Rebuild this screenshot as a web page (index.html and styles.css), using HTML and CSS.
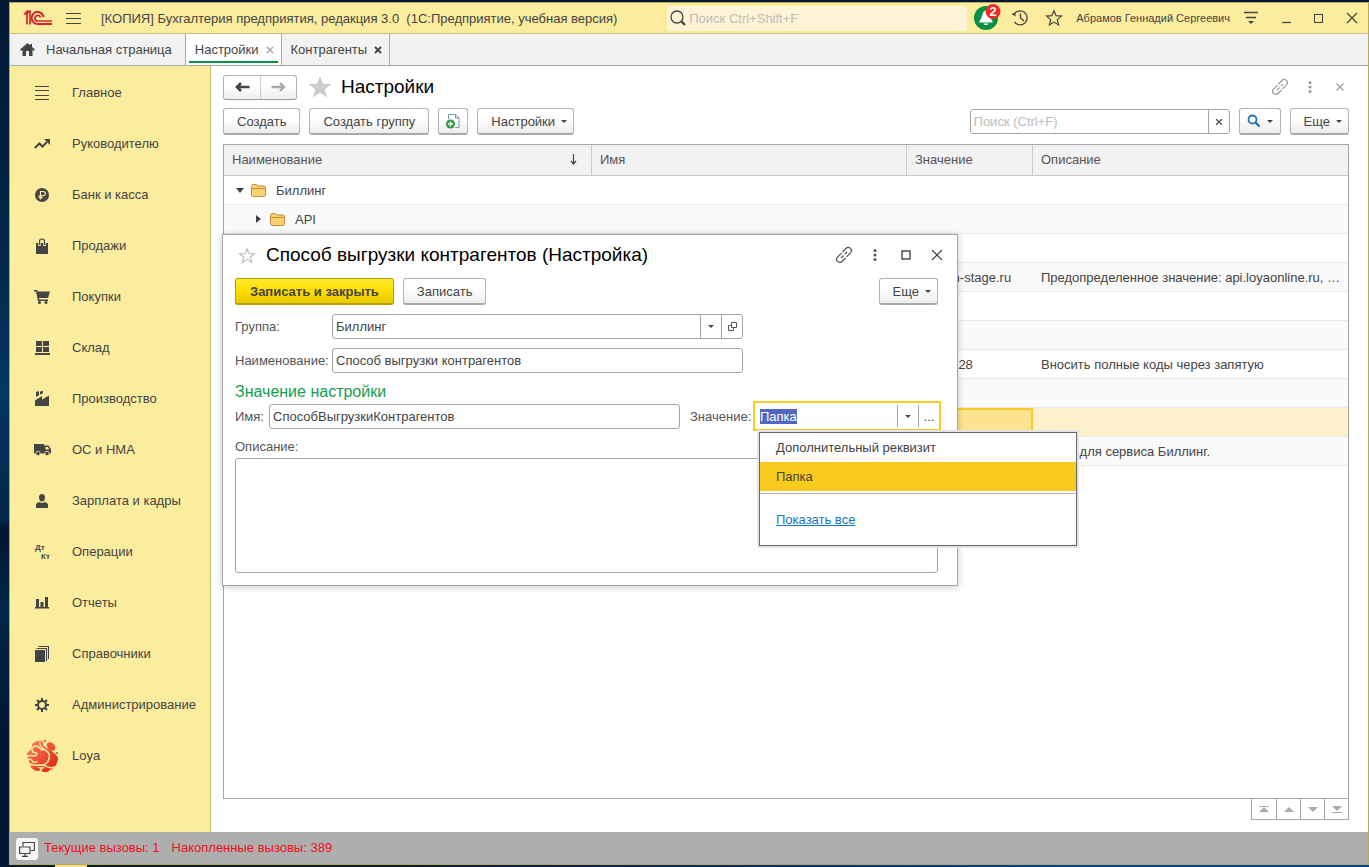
FILE: index.html
```html
<!DOCTYPE html>
<html lang="ru">
<head>
<meta charset="utf-8">
<title>Бухгалтерия предприятия, редакция 3.0</title>
<link rel="stylesheet" href="styles.css">
</head>
<body class="desktop">
<div class="app">
  <header class="titlebar">
    <svg class="logo" width="30" height="18" viewBox="0 0 30 18" fill="none" stroke="#d8232a" stroke-width="2"><path d="M1 5.500l3-3v13M3 6l3-4h1v13.500" stroke-width="1.700"/><path d="M20.500 8A6 6 0 1 0 15 15h14"/><path d="M17.500 8.500a2.800 2.800 0 1 0-2.500 3.500h14" stroke-width="1.700"/></svg>
    <button class="icon-btn burger" aria-label="Меню"><svg width="15" height="13" viewBox="0 0 15 13" stroke="#444" stroke-width="1.200"><path d="M0 1.500h15M0 6.500h15M0 11.500h15"/></svg></button>
    <span class="app-title">[КОПИЯ] Бухгалтерия предприятия, редакция 3.0&nbsp; (1С:Предприятие, учебная версия)</span>
    <label class="global-search">
      <svg width="18" height="18" viewBox="0 0 18 18" fill="none" stroke="#444"><circle cx="8" cy="8" r="6" stroke-width="1.300"/><path d="M12.500 12.500l3.500 3.500" stroke-width="2.400"/></svg>
      <input type="text" placeholder="Поиск Ctrl+Shift+F">
    </label>
    <div class="title-tools">
      <button class="icon-btn bell" aria-label="Оповещения"><svg width="28" height="28" viewBox="0 0 28 28"><circle cx="13" cy="15" r="12" fill="#059142"/><path d="M13 7.500c4 0 3.500 7.500 6.500 10.500v1.500h-13V18c3-3 2.500-10.500 6.500-10.500zM10.500 20.500h5c-.5 2-4.500 2-5 0z" fill="#fff"/><circle cx="20" cy="8.500" r="7.500" fill="#f12b24"/><text x="20" y="13" text-anchor="middle" class="badge-text">2</text></svg></button>
      <button class="icon-btn" aria-label="История"><svg width="18" height="18" viewBox="0 0 18 18" fill="none" stroke="#444" stroke-width="1.300"><path d="M3 5.500A7 7 0 1 1 3.500 13"/><path d="M9.500 4.500V9l3.500 3"/><path d="M.5 5l4 2.500V3.500z" fill="#444" stroke="none"/></svg></button>
      <button class="icon-btn favorites" aria-label="Избранное"><svg width="18" height="18" viewBox="0 0 18 18" fill="none" stroke="#444" stroke-width="1.200"><path d="M9 1.800l2.100 4.900 5.300.4-4.100 3.500 1.300 5.300L9 13.100l-4.600 2.800 1.300-5.300-4.100-3.500 5.300-.4z"/></svg></button>
      <span class="user">Абрамов Геннадий Сергеевич</span>
      <button class="icon-btn" aria-label="Сервис"><svg width="16" height="14" viewBox="0 0 16 14"><path d="M1 1.500h14M3 6.500h10" stroke="#444" stroke-width="1.400"/><path d="M5 10h6l-3 3z" fill="#444"/></svg></button>
      <button class="icon-btn" aria-label="Свернуть"><svg width="12" height="12" viewBox="0 0 12 12"><path d="M2 10.500h9" stroke="#444" stroke-width="1.200"/></svg></button>
      <button class="icon-btn" aria-label="Развернуть"><svg width="12" height="12" viewBox="0 0 12 12"><rect x="1.500" y="2.500" width="8" height="8" fill="none" stroke="#444"/></svg></button>
      <button class="icon-btn" aria-label="Закрыть"><svg width="12" height="12" viewBox="0 0 12 12"><path d="M1 1l10 10M11 1L1 11" stroke="#444" stroke-width="1.200"/></svg></button>
    </div>
  </header>

  <nav class="tabs">
    <button class="tab tab-home"><svg width="15" height="13" viewBox="0 0 15 13"><path d="M7.500 0L0 6.500 1.200 7.800 2.500 7v6H6V8h3v5h3.500V7l1.300.8L15 6.500 12 4V1h-2v1.200z" fill="#444"/></svg>Начальная страница</button>
    <button class="tab tab-active">Настройки<svg class="tab-x" width="8" height="8" viewBox="0 0 8 8"><path d="M1 1l6 6M7 1L1 7" stroke="#aaa" stroke-width="1.500"/></svg></button>
    <button class="tab">Контрагенты<svg class="tab-x" width="8" height="8" viewBox="0 0 8 8"><path d="M1 1l6 6M7 1L1 7" stroke="#444" stroke-width="1.800"/></svg></button>
  </nav>

  <div class="workspace">
    <nav class="sidebar">
      <a class="section" href="#"><span class="section-icon"><svg width="14" height="14" viewBox="0 0 14 14" stroke="#444"><path d="M0 .5h14M0 4.500h14M0 9.500h14M0 13.500h14"/></svg></span>Главное</a>
      <a class="section" href="#"><span class="section-icon"><svg width="16" height="10" viewBox="0 0 16 10"><path d="M.8 9l4.700-4.500 3 3L13 3" fill="none" stroke="#444" stroke-width="2"/><path d="M10 0h6v6z" fill="#444"/></svg></span>Руководителю</a>
      <a class="section" href="#"><span class="section-icon"><svg width="14" height="14" viewBox="0 0 14 14"><circle cx="7" cy="7" r="7" fill="#444"/><path d="M5.500 11.500V3.500h2.700a2 2 0 0 1 0 4.300H3.500M3.500 9.700h4" fill="none" stroke="#fbec9e" stroke-width="1.200"/></svg></span>Банк и касса</a>
      <a class="section" href="#"><span class="section-icon"><svg width="14" height="16" viewBox="0 0 14 16"><path d="M1 5h12v11H1z" fill="#444"/><path d="M4.500 8V3.500a2.500 2.500 0 0 1 5 0V8" fill="none" stroke="#fbec9e" stroke-width="2.600"/><path d="M4.500 7V3.500a2.500 2.500 0 0 1 5 0V7" fill="none" stroke="#444" stroke-width="1.200"/></svg></span>Продажи</a>
      <a class="section" href="#"><span class="section-icon"><svg width="16" height="14" viewBox="0 0 16 14" fill="#444"><path d="M0 0h3l.6 1.500H16L14 8H5l.3 1.500H14V11H4L2 1.500H0z"/><circle cx="5.500" cy="12.500" r="1.500"/><circle cx="12" cy="12.500" r="1.500"/></svg></span>Покупки</a>
      <a class="section" href="#"><span class="section-icon"><svg width="15" height="14" viewBox="0 0 15 14" fill="#444"><path d="M1 0h6v5H1zM8 0h6v5H8zM1 6h6v5H1zM8 6h6v5H8zM0 12h15v2H0z"/></svg></span>Склад</a>
      <a class="section" href="#"><span class="section-icon"><svg width="14" height="15" viewBox="0 0 14 15" fill="#444"><path d="M0 15V9.500l7-4.500v3.500L14 4.500V15zM1 .8L4 .2v4L1 6zM5 .6L8 0v2L5 3.800z"/></svg></span>Производство</a>
      <a class="section" href="#"><span class="section-icon"><svg width="17" height="12" viewBox="0 0 17 12"><path d="M0 0h10v1.500h4.500L17 5v4.500H0z" fill="#444"/><path d="M11.500 3H14l1.200 2.500h-3.700z" fill="#fbec9e"/><g fill="#444" stroke="#fbec9e" stroke-width=".8"><circle cx="4" cy="9.500" r="2.200"/><circle cx="13" cy="9.500" r="2.200"/></g></svg></span>ОС и НМА</a>
      <a class="section" href="#"><span class="section-icon"><svg width="12" height="14" viewBox="0 0 12 14" fill="#444"><path d="M6 0c2 0 3 1.300 3 3.200C9 5.500 7.800 7.500 6 7.500S3 5.500 3 3.200C3 1.300 4 0 6 0zM0 14v-3c0-2 2-2.500 3.500-3 1.500 1.200 3.500 1.200 5 0 1.500.5 3.500 1 3.500 3v3z"/></svg></span>Зарплата и кадры</a>
      <a class="section" href="#"><span class="section-icon"><svg width="16" height="16" viewBox="0 0 16 16" class="dtkt"><text x="1" y="6">Дт</text><text x="7" y="15">Кт</text></svg></span>Операции</a>
      <a class="section" href="#"><span class="section-icon"><svg width="14" height="12" viewBox="0 0 14 12" fill="#444"><path d="M1 2h3v8H1zM5.500 5h3v5h-3zM10 0h3v10h-3zM0 10h14v1.500H0z"/></svg></span>Отчеты</a>
      <a class="section" href="#"><span class="section-icon"><svg width="14" height="16" viewBox="0 0 14 16"><path d="M0 4h10v12H0z" fill="#444"/><path d="M1.500 2.500h10V15M3.500.5h10V13" fill="none" stroke="#444" stroke-width="1.100"/></svg></span>Справочники</a>
      <a class="section" href="#"><span class="section-icon"><svg width="14" height="14" viewBox="0 0 14 14" stroke="#444" fill="none"><circle cx="7" cy="7" r="4" stroke-width="2"/><path d="M7 0v3M7 11v3M0 7h3M11 7h3M2 2l2.200 2.200M9.800 9.800L12 12M12 2L9.800 4.200M4.200 9.800L2 12" stroke-width="2"/></svg></span>Администрирование</a>
      <a class="section" href="#"><span class="section-icon"><svg width="34" height="34" viewBox="0 0 34 34"><defs><linearGradient id="loya" gradientUnits="userSpaceOnUse" x1="4" y1="4" x2="28" y2="30"><stop offset="0" stop-color="#ff7a5c"/><stop offset="1" stop-color="#e02c12"/></linearGradient></defs><g fill="url(#loya)"><path d="M7 5C10 2 14 1 17 2c2 1 0 3 2 5 3 3 7 4 10 7 2 2 4 3 4 6-1 6-4 10-8 11-3 0-5-3-8-3-4 0-6 1-9-1-4-3-6-8-6-12 1-3 5-4 5-8z"/><ellipse cx="26" cy="7.500" rx="5" ry="3.500" transform="rotate(45 26 7.500)"/><ellipse cx="20.500" cy="31" rx="4" ry="2" transform="rotate(-8 20.500 31)"/><circle cx="20" cy="2" r="1.200"/><circle cx="32" cy="14" r="1"/><path d="M5 27c3-1 6 2 9 2 2 1 1 3-1 3-3 0-6-2-8-5z"/></g><g fill="none" stroke="#fbec9e" stroke-width="1.500" stroke-linecap="round"><path d="M15 3c-1 3 2 6 5 8 4 2 5 5 4 9s-5 7-10 6c-3 0-5 1-8-1"/><path d="M2 17c4-1 6 0 8 0 3-1 2-4 0-3-4-1-4-6 0-7 5-1 4 4 8 4"/><path d="M3 21c2-2 4 0 4 1 1 2 3 1 5 1M17 26c4 0 7 5 12 2"/></g></svg></span>Loya</a>
    </nav>

    <main class="page">
      <div class="page-head">
        <div class="nav-pair">
          <button aria-label="Назад"><svg width="15" height="12" viewBox="0 0 15 12"><path d="M6 2L2 6l4 4M2 6h12.500" fill="none" stroke="#444" stroke-width="2.600"/></svg></button>
          <button aria-label="Вперед"><svg width="15" height="12" viewBox="0 0 15 12"><path d="M9 2l4 4-4 4M13 6H.5" fill="none" stroke="#aaa" stroke-width="2.400"/></svg></button>
        </div>
        <svg class="page-star" width="24" height="22" viewBox="0 0 24 22"><path d="M12 0l2.900 7.800 8.600.3-6.800 5.200 2.400 8.200L12 16.700 4.900 21.500l2.400-8.200L.5 8.100l8.600-.3z" fill="#ccc"/></svg>
        <h1 class="heading grow">Настройки</h1>
        <div class="page-tools">
          <button class="icon-btn" aria-label="Ссылка"><svg width="18" height="18" viewBox="0 0 18 18" fill="none" stroke="#999" stroke-width="1.200"><path d="M7.500 6l3.500-3.500a3 3 0 0 1 4.500 4.300l-4 4M10.500 12L7 15.500a3 3 0 0 1-4.500-4.300l4-4M6 12l2.500-2.500M10 8l2-2"/></svg></button>
          <button class="icon-btn" aria-label="Действия"><svg width="18" height="12" viewBox="0 0 18 12" fill="#999"><circle cx="9" cy="1.500" r="1.500"/><circle cx="9" cy="6" r="1.500"/><circle cx="9" cy="10.500" r="1.500"/></svg></button>
          <button class="icon-btn" aria-label="Закрыть вкладку"><svg width="18" height="8" viewBox="0 0 18 8"><path d="M5.500.5l7 7M12.500.5l-7 7" stroke="#999" stroke-width="1.100"/></svg></button>
        </div>
      </div>

      <div class="commands">
        <button class="btn">Создать</button>
        <button class="btn">Создать группу</button>
        <button class="btn btn-icon" aria-label="Создать копированием"><svg width="14" height="16" viewBox="0 0 14 16"><path d="M2.500 6V1.500h7L13 5v9.500H9" fill="#fff" stroke="#7c93a8"/><path d="M9.500 1.500V5H13" fill="none" stroke="#7c93a8"/><circle cx="4.500" cy="11" r="4.500" fill="#2ca03c"/><path d="M4.500 8.500v5M2 11h5" stroke="#fff" stroke-width="1.400"/></svg></button>
        <button class="btn btn-drop">Настройки<svg class="caret" width="6" height="3" viewBox="0 0 6 3"><path d="M0 0h6L3 3z" fill="#444"/></svg></button>
        <span class="grow"></span>
        <div class="field list-search">
          <input type="text" placeholder="Поиск (Ctrl+F)" aria-label="Поиск">
          <button aria-label="Очистить"><svg width="6" height="6" viewBox="0 0 6 6"><path d="M0 0l6 6M6 0L0 6" stroke="#555" stroke-width="1.300"/></svg></button>
        </div>
        <button class="btn btn-find" aria-label="Найти"><svg width="14" height="14" viewBox="0 0 14 14" fill="none" stroke="#2272b4"><circle cx="5.500" cy="5.500" r="4" stroke-width="1.800"/><path d="M8.500 8.500l4 4" stroke-width="2.400"/></svg><svg class="caret" width="6" height="3" viewBox="0 0 6 3"><path d="M0 0h6L3 3z" fill="#444"/></svg></button>
        <button class="btn btn-more">Еще<svg class="caret" width="6" height="3" viewBox="0 0 6 3"><path d="M0 0h6L3 3z" fill="#444"/></svg></button>
      </div>

      <div class="list">
        <table class="grid">
          <colgroup><col class="col-title"><col class="col-name"><col class="col-value"><col></colgroup>
          <thead>
            <tr><th><div class="sorted">Наименование<svg width="7" height="11" viewBox="0 0 7 11"><path d="M3.500 0v9M1 7l2.500 3L6 7" fill="none" stroke="#444" stroke-width="1.200"/></svg></div></th><th>Имя</th><th>Значение</th><th>Описание</th></tr>
          </thead>
          <tbody>
            <tr><td><div class="node"><span class="twist"><svg width="8" height="5" viewBox="0 0 8 5"><path d="M0 0h8L4 5z" fill="#444"/></svg></span><svg class="folder" width="15" height="13" viewBox="0 0 15 13"><path d="M.5 11V2.500l1-2h4l1 1.500h7l1 1v8l-1 1.500h-12z" fill="#f8d271" stroke="#c58f3b"/><path d="M1 4.500h13" stroke="#c58f3b"/></svg>Биллинг</div></td><td></td><td></td><td></td></tr>
            <tr><td><div class="node node-child"><span class="twist"><svg width="5" height="8" viewBox="0 0 5 8"><path d="M0 0v8l5-4z" fill="#444"/></svg></span><svg class="folder" width="15" height="13" viewBox="0 0 15 13"><path d="M.5 11V2.500l1-2h4l1 1.500h7l1 1v8l-1 1.500h-12z" fill="#f8d271" stroke="#c58f3b"/><path d="M1 4.500h13" stroke="#c58f3b"/></svg>API</div></td><td></td><td></td><td></td></tr>
            <tr><td></td><td></td><td></td><td></td></tr>
            <tr><td></td><td></td><td>ai.loyan-stage.ru</td><td>Предопределенное значение: api.loyaonline.ru, …</td></tr>
            <tr><td></td><td></td><td></td><td></td></tr>
            <tr><td></td><td></td><td></td><td></td></tr>
            <tr><td></td><td></td><td>77010228</td><td>Вносить полные коды через запятую</td></tr>
            <tr><td></td><td></td><td></td><td></td></tr>
            <tr class="current"><td></td><td></td><td class="cell-current"></td><td></td></tr>
            <tr><td></td><td></td><td></td><td>Логин для сервиса Биллинг.</td></tr>
          </tbody>
        </table>
      </div>
      <div class="pager">
        <button aria-label="В начало"><svg width="10" height="7" viewBox="0 0 10 7" fill="#aaa"><path d="M0 0h10v1H0zM5 1l5 5H0z"/></svg></button>
        <button aria-label="Вверх"><svg width="10" height="5" viewBox="0 0 10 5"><path d="M5 0l5 5H0z" fill="#aaa"/></svg></button>
        <button aria-label="Вниз"><svg width="10" height="5" viewBox="0 0 10 5"><path d="M0 0h10L5 5z" fill="#aaa"/></svg></button>
        <button aria-label="В конец"><svg width="10" height="7" viewBox="0 0 10 7" fill="#aaa"><path d="M0 6h10v1H0zM0 0h10L5 5z"/></svg></button>
      </div>

      <section class="dialog" role="dialog" aria-labelledby="dialog-title">
        <div class="dialog-head">
          <svg width="18" height="17" viewBox="0 0 18 17"><path d="M9 1.500l1.900 5.100 5.600.1-4.400 3.500 1.600 5.300L9 12.400l-4.700 3.100 1.600-5.300L1.500 6.700l5.600-.1z" fill="none" stroke="#bbb" stroke-width="1.100"/></svg>
          <h2 class="heading grow" id="dialog-title">Способ выгрузки контрагентов (Настройка)</h2>
          <button class="icon-btn" aria-label="Ссылка"><svg width="18" height="18" viewBox="0 0 18 18" fill="none" stroke="#555" stroke-width="1.200"><path d="M7.500 6l3.500-3.500a3 3 0 0 1 4.500 4.300l-4 4M10.500 12L7 15.500a3 3 0 0 1-4.500-4.300l4-4M6 12l2.500-2.500M10 8l2-2"/></svg></button>
          <button class="icon-btn" aria-label="Действия"><svg width="18" height="12" viewBox="0 0 18 12" fill="#555"><circle cx="9" cy="1.500" r="1.500"/><circle cx="9" cy="6" r="1.500"/><circle cx="9" cy="10.500" r="1.500"/></svg></button>
          <button class="icon-btn" aria-label="Развернуть"><svg width="18" height="10" viewBox="0 0 18 10"><rect x="5" y="1" width="8" height="8" fill="none" stroke="#333" stroke-width="1.300"/></svg></button>
          <button class="icon-btn" aria-label="Закрыть"><svg width="18" height="12" viewBox="0 0 18 12"><path d="M4 1l10 10M14 1L4 11" stroke="#444" stroke-width="1.200"/></svg></button>
        </div>
        <div class="commands">
          <button class="btn btn-primary">Записать и закрыть</button>
          <button class="btn">Записать</button>
          <span class="grow"></span>
          <button class="btn btn-more">Еще<svg class="caret" width="6" height="3" viewBox="0 0 6 3"><path d="M0 0h6L3 3z" fill="#444"/></svg></button>
        </div>
        <div class="form-row">
          <label class="caption" for="group">Группа:</label>
          <div class="field">
            <input id="group" type="text" value="Биллинг">
            <button aria-label="Выбрать"><svg width="6" height="3" viewBox="0 0 6 3"><path d="M0 0h6L3 3z" fill="#444"/></svg></button>
            <button aria-label="Открыть"><svg width="9" height="9" viewBox="0 0 9 9" fill="none" stroke="#555"><path d="M3.500.5h5v5h-5zM3 3.500H.5v5h5V6"/></svg></button>
          </div>
        </div>
        <div class="form-row">
          <label class="caption" for="title">Наименование:</label>
          <div class="field"><input id="title" type="text" value="Способ выгрузки контрагентов"></div>
        </div>
        <h3 class="group-title">Значение настройки</h3>
        <div class="pair-row">
          <label for="name">Имя:</label>
          <div class="field"><input id="name" type="text" value="СпособВыгрузкиКонтрагентов"></div>
          <label class="value-label" for="value">Значение:</label>
          <div class="combo">
            <input id="value" type="text" value="Папка" autocomplete="off">
            <button aria-label="Список"><svg width="6" height="3" viewBox="0 0 6 3"><path d="M0 0h6L3 3z" fill="#444"/></svg></button>
            <button aria-label="Выбрать">...</button>
            <div class="choices">
              <button class="choice">Дополнительный реквизит</button>
              <button class="choice choice-on">Папка</button>
              <div class="choices-foot"><a href="#">Показать все</a></div>
            </div>
          </div>
        </div>
        <label class="note-label" for="note">Описание:</label>
        <textarea class="note" id="note"></textarea>
      </section>
    </main>
  </div>

  <footer class="status">
    <button class="status-btn" aria-label="Окна"><svg width="16" height="16" viewBox="0 0 16 16" fill="none" stroke="#444" stroke-width="1.200"><path d="M4 5V1.500h11.500v8H12M.6 6h10.400v6.500H.6zM6 12.500V15M3 15.300h6"/></svg></button>
    <span>Текущие вызовы: 1</span><span>Накопленные вызовы: 389</span>
  </footer>
</div>
<script src="app.js"></script>
</body>
</html>
```
FILE: styles.css
```css
* { box-sizing: border-box; }

body, button, input, textarea {
  font-family: "Liberation Sans", Arial, sans-serif;
  font-size: 13px;
  color: #444;
}

button { cursor: pointer; white-space: nowrap; }
h1, h2, h3 { margin: 0; font-weight: normal; }
svg { display: block; flex: none; }
.grow { flex: 1; }

.desktop {
  margin: 0;
  height: 100vh;
  padding: 2px 0 2px 9px;
  background:
    linear-gradient(#f5dd86, #f5dd86) 55px 100% / 32px 2px no-repeat,
    linear-gradient(90deg, #021a38 30%, #00498c 80%) 0 100% / 100% 2px no-repeat,
    linear-gradient(#021833, #02264a 28%, #033762 45%, #02264c 60%, #011530 61%, #02264a 70%, #011733 85%);
}

.app {
  display: flex;
  flex-direction: column;
  height: 100%;
  border: 1px solid #b5a75c;
  background: #fff;
}

.icon-btn {
  display: flex;
  padding: 0;
  border: 0;
  background: none;
}

/* Title bar */
.titlebar {
  display: flex;
  align-items: center;
  height: 31px;
  padding: 0 10px 0 13px;
  background: #fbec9e;
  border-bottom: 1px solid #c9bd7d;
}
.burger { margin: 0 20px 0 13px; }
.app-title { flex: 1; white-space: nowrap; }
.global-search {
  display: flex;
  align-items: center;
  gap: 2px;
  width: 300px;
  height: 25px;
  padding: 0 2px;
  border-radius: 3px;
  background: #fdf5d5;
}
.global-search input {
  flex: 1;
  min-width: 0;
  padding: 0;
  border: 0;
  background: none;
}
::placeholder { color: #bdbdbd; opacity: 1; }
.title-tools {
  display: flex;
  align-items: center;
  gap: 21px;
  padding-left: 6px;
}
.bell { margin-right: -11px; padding-bottom: 3px; }
.favorites { margin-left: -5px; }
.badge-text { fill: #fff; font-size: 13px; font-weight: bold; }
.user { margin: 0 -8px; font-size: 11px; }

/* Tabs of open pages */
.tabs {
  display: flex;
  height: 32px;
  background: #f2f2f2;
  border-bottom: 1px solid #aaa;
}
.tab {
  display: flex;
  align-items: center;
  gap: 7px;
  padding: 0 7px 0 9px;
  border: 0;
  border-right: 1px solid #aaa;
  background: none;
}
.tab-home { gap: 11px; padding: 0 13px 0 10px; }
.tab-active {
  background: linear-gradient(#009646, #009646) center calc(100% - 2px) / calc(100% - 6px) 2px no-repeat #fff;
}

.workspace { display: flex; flex: 1; min-height: 0; }

/* Sections panel */
.sidebar {
  width: 201px;
  padding-top: 1px;
  background: #fbec9e;
  border-right: 1px solid #cdbc78;
}
.section {
  display: flex;
  align-items: center;
  gap: 13px;
  height: 51px;
  padding-left: 15px;
  color: #444;
  text-decoration: none;
}
.section-icon {
  display: flex;
  justify-content: center;
  width: 34px;
}
.dtkt { fill: #444; font-size: 8px; font-weight: bold; }

/* Settings list */
.page {
  position: relative;
  display: flex;
  flex-direction: column;
  flex: 1;
  min-width: 0;
  padding: 0 19px 12px 12px;
}
.page-head { display: flex; align-items: center; height: 42px; }
.heading { font-size: 19px; color: #000; white-space: nowrap; }
.nav-pair {
  display: flex;
  height: 25px;
  border: 1px solid #b4b4b4;
  border-bottom-color: #999;
  border-radius: 3px;
  background: linear-gradient(#fff 40%, #ededed);
}
.nav-pair button {
  display: flex;
  align-items: center;
  justify-content: center;
  width: 36px;
  padding: 0;
  border: 0;
  background: none;
}
.nav-pair button + button { border-left: 1px solid #ccc; }
.page-star { margin: 0 9px 0 11px; }
.page-tools { display: flex; align-items: center; gap: 12px; }

.commands { display: flex; align-items: center; gap: 9px; }
.btn {
  display: flex;
  align-items: center;
  justify-content: center;
  height: 27px;
  padding: 0 13px;
  border: 1px solid #b4b4b4;
  border-bottom: 2px solid #aaa;
  border-radius: 3px;
  background: linear-gradient(#fff 40%, #ededed);
}
.btn-icon { width: 30px; padding: 0; }
.caret { margin-left: 6px; }
.btn-drop, .btn-more { padding-right: 6px; }
.btn-find { width: 42px; padding: 0; }
.btn-primary {
  padding: 0 14px;
  border-color: #b8a000;
  background: linear-gradient(#ffe933, #ffe000 45%, #e8cc00);
  font-weight: bold;
}

.field {
  display: flex;
  flex: none;
  width: 411px;
  height: 25px;
  border: 1px solid #a6a6a6;
  border-radius: 3px;
  background: #fff;
}
.field input, .combo input {
  flex: 1;
  min-width: 0;
  padding: 0 3px;
  border: 0;
  outline: 0;
  background: none;
}
.field button, .combo > button {
  display: flex;
  flex: none;
  align-items: center;
  justify-content: center;
  width: 21px;
  padding: 0;
  border: 0;
  border-left: 1px solid #a6a6a6;
  background: none;
}
.list-search { width: 260px; }

.list {
  flex: 1;
  min-height: 0;
  margin-top: 9px;
  overflow: hidden;
  border: 1px solid #a6a6a6;
}
.grid {
  width: 100%;
  table-layout: fixed;
  border-collapse: separate;
  border-spacing: 0;
}
.col-title { width: 368px; }
.col-name { width: 315px; }
.col-value { width: 126px; }
.grid th {
  height: 31px;
  padding: 0 8px 1px;
  border-right: 1px solid #ccc;
  border-bottom: 1px solid #ccc;
  background: #f2f2f2;
  color: #555;
  font-weight: normal;
  text-align: left;
}
.grid th:last-child { border-right: 0; }
.sorted { display: flex; align-items: center; justify-content: space-between; padding-right: 6px; }
.grid td {
  height: 29px;
  padding: 0 2px 0 8px;
  border-bottom: 1px solid #e8e8e8;
  overflow: hidden;
  white-space: nowrap;
  text-overflow: ellipsis;
}
.grid tr:nth-child(even) td { background: #fafafa; }
.node { display: flex; align-items: center; }
.node-child { padding-left: 19px; }
.twist { display: flex; justify-content: center; width: 15px; }
.folder { margin: 0 10px 0 4px; }
.grid .current td { background: #fff2cb; }
.grid .current .cell-current { background: #fee391; border: 2px solid #facb23; }

.pager {
  display: flex;
  align-self: flex-end;
  height: 21px;
  border: 1px solid #aaa;
  border-top: 0;
}
.pager button {
  display: flex;
  align-items: center;
  justify-content: center;
  width: 24px;
  padding: 0;
  border: 0;
  background: none;
}
.pager button + button { border-left: 1px solid #aaa; }

/* Floating form over the list */
.dialog {
  position: absolute;
  top: 168px;
  left: 11px;
  width: 736px;
  padding: 0 19px 12px 12px;
  border: 1px solid #a6a6a6;
  background: #fff;
  box-shadow: 0 1px 7px rgba(0, 0, 0, .22);
}
.dialog-head {
  display: flex;
  align-items: center;
  gap: 13px;
  height: 40px;
  margin: 0 -8px 3px 3px;
}
.dialog-head .heading { margin-left: -3px; }
.form-row { display: flex; align-items: center; margin-top: 9px; }
.caption { width: 97px; color: #555; }
.group-title { margin-top: 9px; font-size: 16px; line-height: 19px; color: #14a04c; }
.pair-row { display: flex; align-items: center; height: 30px; margin-right: -3px; }
.pair-row label { flex: none; width: 34px; color: #555; }
.pair-row .value-label { width: 63px; margin-left: 10px; }
.combo {
  position: relative;
  display: flex;
  flex: 1;
  min-width: 0;
  height: 30px;
  padding: 2px 0;
  border: 2px solid #facb23;
  background: #fff;
}
.combo input { padding: 0 5px; }
.combo input::selection { background: #5068c0; color: #fff; }
.note-label { display: block; margin: 8px 0 3px; line-height: 16px; color: #555; }
.note {
  display: block;
  width: 100%;
  height: 115px;
  border: 1px solid #a6a6a6;
  border-radius: 3px;
  resize: none;
}

.choices {
  position: absolute;
  top: calc(100% + 3px);
  left: 4px;
  width: 318px;
  border: 1px solid #666;
  background: #fff;
  box-shadow: 0 0 0 2px #e4e4e4;
}
.choice {
  display: block;
  width: 100%;
  height: 29px;
  padding: 0 16px;
  border: 0;
  background: #fff;
  text-align: left;
}
.choice-on { background: #facb1f; }
.choices-foot {
  margin-top: 2px;
  padding: 17px 16px;
  border-top: 1px solid #b4b4b4;
  line-height: 17px;
}
.choices-foot a { color: #1477c0; }

/* Status bar */
.status {
  display: flex;
  align-items: center;
  gap: 12px;
  height: 32px;
  padding: 0 6px 2px;
  background: #aeaeae;
  color: #f0101c;
}
.status-btn {
  display: flex;
  align-items: center;
  justify-content: center;
  width: 22px;
  height: 22px;
  margin: 4px -6px 0 0;
  padding: 0;
  border: 0;
  border-radius: 3px;
  background: #f6f6f6;
}
```
FILE: app.js
```js
const valueInput = document.getElementById("value");
valueInput.focus();
valueInput.select();
```
